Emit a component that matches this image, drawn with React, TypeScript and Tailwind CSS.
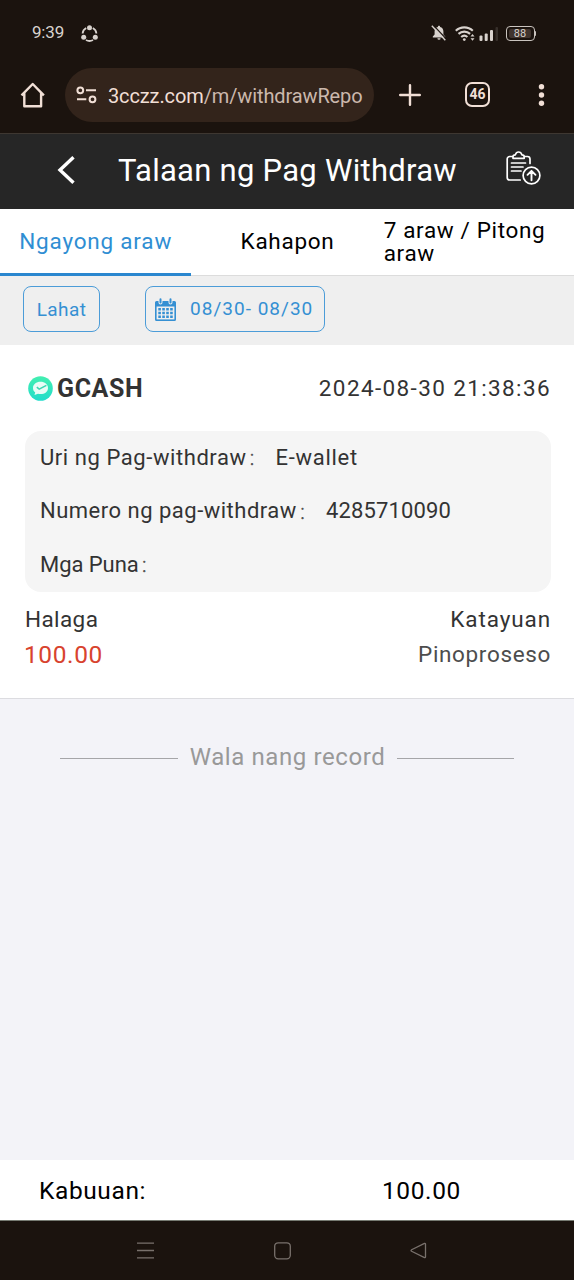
import React from "react";

interface DetailItem {
  label: string;
  value: string;
  labelClass: string;
  valueClass: string;
}

const details: DetailItem[] = [
  {
    label: "Uri ng Pag-withdraw",
    value: "E-wallet",
    labelClass: "tracking-[0.57px]",
    valueClass: "tracking-[0.7px]",
  },
  {
    label: "Numero ng pag-withdraw",
    value: "4285710090",
    labelClass: "tracking-[0.5px]",
    valueClass: "tracking-[0.15px]",
  },
  { label: "Mga Puna", value: "", labelClass: "tracking-[-0.05px]", valueClass: "" },
];

const StatusBar: React.FC = () => (
  <div className="flex h-[66px] items-center pl-8 pr-[38px] text-[#d8d2cd]">
    <span className="w-[49px] text-[17px] tracking-[-0.2px]">9:39</span>
    <svg className="h-[17px] w-[17px]" viewBox="0 0 17 17" fill="none" stroke="currentColor">
      <path
        d="M5.2 3A6.8 6.8 0 0 0 1.6 8.5M11.8 3a6.8 6.8 0 0 1 3.6 5.5M5 15a7 7 0 0 0 7 0"
        strokeWidth="1.8"
      />
      <g fill="currentColor" stroke="none">
        <circle cx="8.5" cy="2.8" r="2.5" />
        <circle cx="2.7" cy="12.3" r="2.5" />
        <circle cx="14.3" cy="12.3" r="2.5" />
      </g>
    </svg>

    <div className="ml-auto flex items-center">
      <svg className="h-4 w-4" viewBox="0 0 16 16" fill="currentColor">
        <path d="M8 .8c.7 0 1.1.5 1.1 1.1 2.1.5 3.3 2.2 3.3 4.5v3.2l1.8 2v1H1.800v-1l1.800-2V6.400c0-2.300 1.200-4 3.300-4.500C6.900 1.300 7.300.8 8 .8Z" />
        <path d="M6.400 13.200h3.200a1.600 1.600 0 0 1-3.200 0Z" />
        <path d="M2.100 0 15.900 14.600" stroke="#1b130e" strokeWidth="1.200" />
        <path d="M.8 .8 14.300 15.200" stroke="currentColor" strokeWidth="1.400" />
      </svg>
      <svg className="ml-2 h-[17px] w-5" viewBox="0 0 20 17" fill="none" stroke="currentColor">
        <path
          d="M.8 5.800a12.300 12.300 0 0 1 17 0M3.500 8.900a8.600 8.600 0 0 1 11.600 0M6.200 12a4.700 4.700 0 0 1 6.200 0"
          strokeWidth="2.100"
        />
        <circle cx="9.300" cy="14.600" r="1.400" fill="currentColor" stroke="none" />
        <path d="m15.500 11.500 2-2.500 2 2.500ZM15.500 13.200l2 2.500 2-2.500Z" fill="currentColor" stroke="none" />
      </svg>
      <svg className="ml-1 h-[15px] w-5" viewBox="0 0 20 15" fill="currentColor">
        <rect x="0.500" y="9.500" width="3" height="5.500" rx="1" />
        <rect x="5.700" y="7.500" width="3" height="7.500" rx="1" />
        <rect x="11" y="4" width="3" height="11" rx="1" />
        <rect x="16.500" y="1" width="2.500" height="14" rx="1" opacity=".15" />
      </svg>
      <div className="ml-[7px] flex h-[15px] w-[29px] items-center justify-center rounded-[4px] border-[1.5px] border-[#c9c3be]">
        <span className="flex h-[9px] w-[22px] items-center justify-center rounded-[2px] bg-[#40342e] text-[11px] leading-none">
          88
        </span>
      </div>
      <div className="h-[5px] w-[1.5px] rounded-r bg-[#c9c3be]" />
    </div>
  </div>
);

const BrowserBar: React.FC = () => (
  <div className="flex h-[68px] items-start border-b border-[#3e3731] pl-5 pr-[25px] pt-[2px] text-[#f1dfd6]">
    <svg className="mt-3.5 h-[27px] w-[26px]" viewBox="0 0 26 27" fill="none" stroke="currentColor">
      <path d="M1.500 13.300 12.700 2l11.200 11.300M4.300 11v13.200h16.800V11" strokeWidth="2.400" strokeLinejoin="round" />
    </svg>
    <div className="ml-[19px] flex h-[54px] w-[309px] items-center overflow-hidden rounded-full bg-[#33241b] pl-[11px]">
      <svg className="h-[18px] w-[22px] shrink-0" viewBox="0 0 22 18" fill="none" stroke="currentColor" strokeWidth="2">
        <circle cx="4.300" cy="4.300" r="2.900" />
        <path d="M10 4.300h10M1 13.300h9.300" />
        <circle cx="16.500" cy="13.300" r="2.900" />
      </svg>
      <span className="ml-2.5 whitespace-nowrap pt-px text-[20px] tracking-[-0.12px] text-[#cbb8ad]">
        <span className="text-[#f1dfd6]">3cczz.com</span>/m/withdrawRepo
      </span>
    </div>
    <svg className="ml-[24.5px] mt-4 h-[22px] w-[22px]" viewBox="0 0 22 22" fill="none" stroke="currentColor" strokeWidth="2.400">
      <path d="M11 1.200v19.600M1.200 11h19.600" strokeLinecap="round" />
    </svg>
    <div className="ml-[44.5px] mt-3.5 flex h-[25px] w-[25px] items-center justify-center rounded-[7px] border-[2.4px] border-current text-[14px] font-bold">
      46
    </div>
    <svg className="ml-auto mt-4 h-[22px] w-[15px]" viewBox="0 0 15 22" fill="currentColor">
      <circle cx="7.500" cy="2.800" r="2.700" />
      <circle cx="7.500" cy="11" r="2.700" />
      <circle cx="7.500" cy="19.200" r="2.700" />
    </svg>
  </div>
);

const PageHeader: React.FC = () => (
  <div className="flex h-[75px] items-center bg-[#262626] pb-[3px] pl-[57px] text-white">
    <svg className="h-[30px] w-[18px]" viewBox="0 0 18 30" fill="none" stroke="currentColor" strokeWidth="3.400">
      <path d="M16.500 2.300 3 15l13.500 12.700" />
    </svg>
    <h1 className="ml-[43px] w-[388px] whitespace-nowrap text-[31px] leading-none tracking-[0.26px]">
      Talaan ng Pag Withdraw
    </h1>
    <svg
      className="mb-1 h-[34px] w-[35px] shrink-0"
      viewBox="0 0 35 34"
      fill="none"
      stroke="currentColor"
      strokeWidth="1.700"
      strokeLinecap="round"
      strokeLinejoin="round"
    >
      <path d="M6.500 5.500H3.700A2.500 2.500 0 0 0 1.200 8v18.500A2.500 2.500 0 0 0 3.700 29h10.500M18.500 5.500h3A2.500 2.500 0 0 1 24 8v4.500" />
      <path d="M7 7.300V5.500c0-1 .8-1.600 2.300-1.700C9.800 2.200 11 1 12.600 1s2.800 1.200 3.300 2.800c1.500.1 2.300.7 2.300 1.700v1.800Z" />
      <path d="M5.500 12h14M5.500 16h11.500M5.500 20h9.500" />
      <circle cx="25.500" cy="24.500" r="8.400" />
      <path d="M25.500 29.300v-9M21.500 23.800l4-4 4 4" strokeWidth="1.900" />
    </svg>
  </div>
);

const Tabs: React.FC = () => (
  <div className="grid h-[67px] grid-cols-3 border-b border-[#dcdcdc] bg-white text-[22.5px] leading-[22.5px] text-black">
    <div className="-mb-px flex items-center justify-center border-b-[3px] border-[#2a87cf] tracking-[0.8px] text-[#2f8ed3]">
      Ngayong araw
    </div>
    <div className="flex items-center justify-center pb-0.5 pl-px tracking-[0.7px]">Kahapon</div>
    <div className="flex items-center pb-px pl-px tracking-[0.65px]">
      <span className="w-[170px]">7 araw / Pitong araw</span>
    </div>
  </div>
);

const CalendarIcon: React.FC = () => (
  <svg className="h-[23px] w-[21px]" viewBox="0 0 21 23" fill="currentColor">
    <path d="M1.500 3h18A1.500 1.500 0 0 1 21 4.500v17a1.500 1.500 0 0 1-1.500 1.500h-18A1.500 1.500 0 0 1 0 21.500v-17A1.500 1.500 0 0 1 1.500 3Z" />
    <path d="M1.600 8.500h17.800v12.900H1.600Z" fill="#efefef" />
    <path d="M5.500 0v4.500M15.500 0v4.500" stroke="#efefef" strokeWidth="4" strokeLinecap="round" />
    <path d="M5.500 1.200v3.200M15.500 1.200v3.200" stroke="currentColor" strokeWidth="2" strokeLinecap="round" />
    <path
      d="M3.300 11.300h14.600M3.300 15h14.600M3.300 18.700h14.600"
      stroke="currentColor"
      strokeWidth="2.500"
      strokeDasharray="2.600 1.350"
    />
  </svg>
);

const Filters: React.FC = () => (
  <div className="flex h-[69px] items-start bg-[#efefef] pl-[23px] pt-2.5 text-[19px] text-[#3590d3]">
    <button className="flex h-[46px] w-[77px] items-center justify-center rounded-[8px] border border-[#4b9cd8] pt-[3px] tracking-[0.4px]">
      Lahat
    </button>
    <button className="ml-[45px] flex h-[46px] w-[180px] items-center rounded-[8px] border border-[#4b9cd8] pl-[9px]">
      <CalendarIcon />
      <span className="ml-3.5 whitespace-nowrap tracking-[1.02px]">08/30- 08/30</span>
    </button>
  </div>
);

const RecordCard: React.FC = () => (
  <div className="h-[354px] border-b border-[#dcdce0] bg-white pl-[25px] pr-[23px] text-[22.5px] text-[#333]">
    <div className="flex h-[86px] items-center pt-0.5">
      <svg className="mb-0.5 ml-[3px] h-[25px] w-[25px]" viewBox="0 0 25 25">
        <defs>
          <linearGradient id="wallet" x1="0" y1="0" x2="0" y2="1">
            <stop offset="0" stopColor="#43efb0" />
            <stop offset="1" stopColor="#23dccb" />
          </linearGradient>
        </defs>
        <circle cx="12.500" cy="12.500" r="12.300" fill="url(#wallet)" />
        <path
          d="M12.500 5.800c4.300 0 7.500 2.600 7.500 6.100s-3.200 6.200-7.500 6.200c-.9 0-1.700-.1-2.500-.3L6.500 19l.7-2.700C5.700 15.200 5 13.700 5 11.900c0-3.500 3.200-6.100 7.500-6.100Z"
          fill="#e9fcf6"
        />
        <path d="m8.800 11.200 2.400 2 7.200-3.900" fill="none" stroke="#3bd6b0" strokeWidth="1.500" />
      </svg>
      <span className="ml-1 text-[25px] font-bold tracking-[0.6px]">GCASH</span>
      <span className="ml-auto tracking-[1.38px]">2024-08-30 21:38:36</span>
    </div>

    <div className="h-[161px] rounded-[16px] bg-[#f5f5f5] pl-[15px] text-[22px]">
      {details.map((item) => (
        <div key={item.label} className="flex h-[53.6px] items-center pb-px">
          <span className={item.labelClass}>{item.label}</span>
          <span className="w-[29px] pl-px font-['Noto_Sans_CJK_SC',sans-serif] text-[18px] font-light leading-none text-[#555]">
            ：
          </span>
          <span className={item.valueClass}>{item.value}</span>
        </div>
      ))}
    </div>

    <div className="flex justify-between pt-2.5 leading-[35px]">
      <div>
        <p className="tracking-[0.4px]">Halaga</p>
        <p className="-ml-px text-[24.5px] tracking-[0.6px] text-[#d8432e]">100.00</p>
      </div>
      <div className="text-right">
        <p className="tracking-[0.9px]">Katayuan</p>
        <p className="tracking-[0.65px] text-[#4d4d4d]">Pinoproseso</p>
      </div>
    </div>
  </div>
);

const App: React.FC = () => {
  return (
    <div className="flex h-[1280px] w-[574px] flex-col overflow-hidden bg-[#1b130e] font-[Roboto,sans-serif]">
      <StatusBar />
      <BrowserBar />
      <PageHeader />
      <Tabs />
      <Filters />
      <RecordCard />

      <div className="flex-1 bg-[#f3f3f8] pt-10">
        <div className="flex items-center justify-center text-[24px] leading-[36px] text-[#999]">
          <span className="h-px w-[118px] bg-[#a5a5a8]" />
          <span className="w-[219px] whitespace-nowrap pb-0.5 text-center tracking-[0.6px]">Wala nang record</span>
          <span className="h-px w-[117px] bg-[#a5a5a8]" />
        </div>
      </div>

      <div className="flex h-[61px] items-center border-b border-[#777b72] bg-white pl-[39px] pt-0.5 text-[24.5px] text-black">
        <span className="w-[343px] tracking-[0.6px]">Kabuuan:</span>
        <span className="tracking-[0.6px]">100.00</span>
      </div>

      <div className="flex h-[59px] items-center pl-[137px] text-[#79716c]">
        <svg className="h-[18px] w-[17px]" viewBox="0 0 17 18" stroke="currentColor" strokeWidth="1.300">
          <path d="M0 1.200h17M0 8.500h17M0 15.800h17" />
        </svg>
        <svg className="ml-[120px] h-[18px] w-[17px]" viewBox="0 0 17 18" fill="none" stroke="currentColor" strokeWidth="1.300">
          <rect x=".7" y=".8" width="15.600" height="16" rx="3.500" />
        </svg>
        <svg className="ml-[119px] h-[18px] w-[17px]" viewBox="0 0 17 18" fill="none" stroke="currentColor" strokeWidth="1.300">
          <path d="M14.500 1.400 1.600 7.700q-1.200.8 0 1.600l12.900 6.300q1 .3 1-.8V2.200q0-1.100-1-.8Z" />
        </svg>
      </div>
    </div>
  );
};

export default App;
